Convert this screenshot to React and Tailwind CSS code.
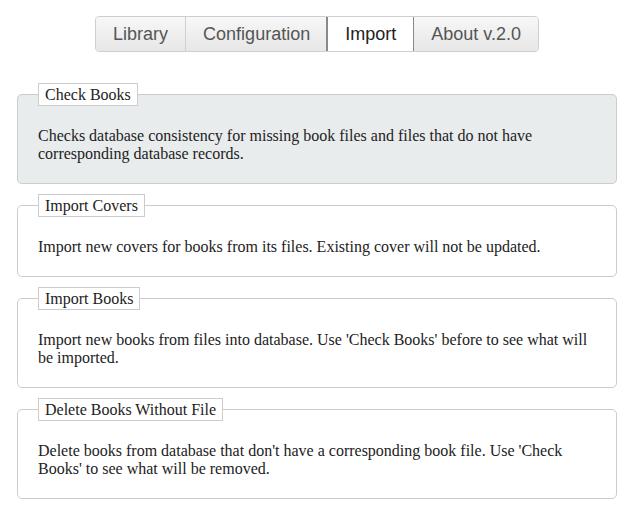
import React from "react";

const tabs = ["Library", "Configuration", "Import", "About v.2.0"];

const sections = [
  {
    title: "Check Books",
    text: "Checks database consistency for missing book files and files that do not have corresponding database records.",
    active: true,
  },
  {
    title: "Import Covers",
    text: "Import new covers for books from its files. Existing cover will not be updated.",
  },
  {
    title: "Import Books",
    text: "Import new books from files into database. Use 'Check Books' before to see what will be imported.",
  },
  {
    title: "Delete Books Without File",
    text: "Delete books from database that don't have a corresponding book file. Use 'Check Books' to see what will be removed.",
  },
];

export default function App() {
  return (
    <div className="w-[630px] h-[510px] bg-white overflow-hidden">
      <div className="ml-[17px] w-[600px]">
        <div className="flex justify-center pt-4">
          <div className="flex rounded-[4px] border border-[#cfcfcf] overflow-hidden font-[family-name:'Liberation_Sans',Arial,sans-serif] text-[18px]">
            {tabs.map((t, i) => {
              const active = t === "Import";
              return (
                <div
                  key={t}
                  className={
                    "h-[34px] flex items-center justify-center px-[17px] leading-none " +
                    (i > 0 ? "border-l " : "") +
                    (active
                      ? "bg-white text-[#222] border-l-[#8a8a8a] outline outline-1 outline-[#8a8a8a] relative z-10"
                      : "bg-gradient-to-b from-[#f7f7f7] to-[#e7e7e7] text-[#555] border-l-[#d0d0d0]")
                  }
                >
                  {t}
                </div>
              );
            })}
          </div>
        </div>
        <div className="mt-[31px] flex flex-col gap-[10px] font-[family-name:'Liberation_Serif','Times_New_Roman',serif] text-[16px] text-[#222]">
          {sections.map((s) => (
            <fieldset
              key={s.title}
              className={
                "m-0 border border-[#cccccc] rounded-[5px] px-5 pt-[21px] pb-5 " +
                (s.active ? "bg-[#e9eced]" : "bg-white")
              }
            >
              <legend className="bg-white border border-[#cccccc] px-[6px] py-px leading-[19px] text-[#222]">
                {s.title}
              </legend>
              <p className="leading-[18px]">{s.text}</p>
            </fieldset>
          ))}
        </div>
      </div>
    </div>
  );
}
